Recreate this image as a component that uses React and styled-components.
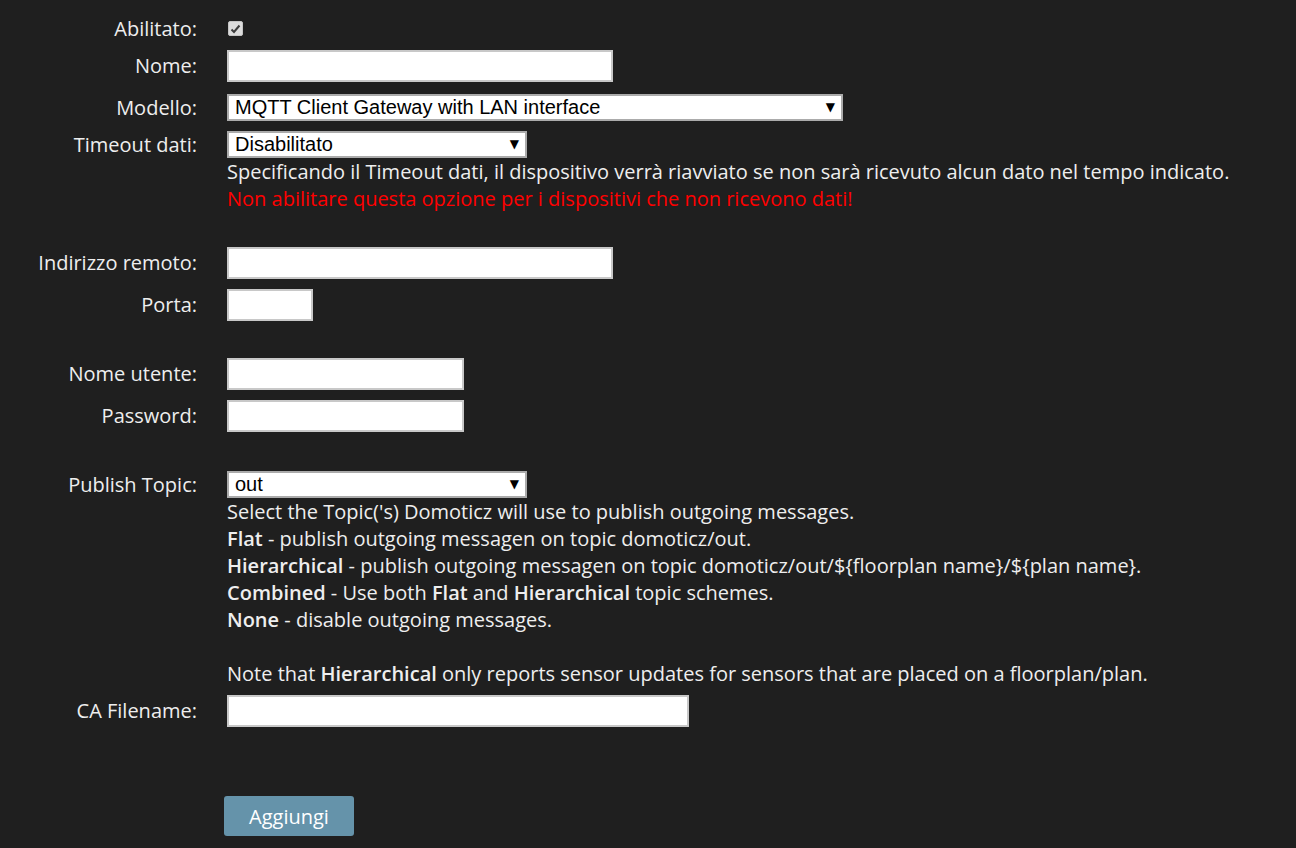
import React from 'react'
import styled, { createGlobalStyle } from 'styled-components'

const GlobalStyle = createGlobalStyle`
  html, body {
    margin: 0;
    padding: 0;
    background: #1f1f1f;
  }
  body {
    font-family: 'Open Sans', 'DejaVu Sans', sans-serif;
    font-size: 20px;
    color: #eeeeee;
  }
  b {
    font-weight: 600;
  }
`

const Form = styled.form`
  padding-top: 15px;
  padding-bottom: 12px;
`

const Row = styled.div`
  display: grid;
  grid-template-columns: 197px 1fr;
  column-gap: 30px;
  margin-top: ${(props) => props.gap || 0}px;
`

const Label = styled.label`
  text-align: right;
  white-space: nowrap;
  line-height: ${(props) => props.h || 27}px;
`

const Cell = styled.div`
  display: flex;
  flex-direction: column;
  align-items: flex-start;
`

const CheckWrap = styled.div`
  height: 27px;
  display: flex;
  align-items: center;
  padding-left: 1px;
`

const CheckBox = styled.span`
  width: 13px;
  height: 13px;
  border: 1px solid #c4c4c4;
  border-radius: 2px;
  background: #dcdcdc;
  display: flex;
  align-items: center;
  justify-content: center;
`

const Input = styled.input`
  display: block;
  box-sizing: border-box;
  width: ${(props) => props.w}px;
  height: 32px;
  border: 2px solid #c8c8c8;
  background: #ffffff;
  margin: 0;
  padding: 0 6px;
  font-size: 18px;
  outline: none;
`

const SelectBox = styled.div`
  position: relative;
  width: ${(props) => props.w}px;
  height: 27px;
  &::after {
    content: '▼';
    position: absolute;
    right: 8px;
    top: 5px;
    line-height: 16px;
    font-family: 'DejaVu Sans', sans-serif;
    font-size: 12px;
    color: #000;
    pointer-events: none;
  }
`

const Select = styled.select`
  display: block;
  appearance: none;
  box-sizing: border-box;
  width: 100%;
  height: 27px;
  margin: 0;
  border: 2px solid #ababab;
  border-radius: 0;
  background: #ffffff;
  color: #000;
  padding: 0 6px;
  font-family: 'Liberation Sans', Arial, sans-serif;
  font-size: 20px;
  line-height: 23px;
  outline: none;
`

const Help = styled.div`
  line-height: 27px;
  color: ${(props) => (props.warn ? '#ff0000' : '#eeeeee')};
  white-space: nowrap;
`

const Spacer = styled.div`
  height: 27px;
`

const Button = styled.button`
  margin-left: -3px;
  width: 130px;
  height: 40px;
  border: none;
  border-radius: 3px;
  background: #6593aa;
  color: #ffffff;
  font-family: 'Open Sans', sans-serif;
  font-size: 20px;
  padding: 0;
  cursor: pointer;
`

const Tick = () => (
  <svg width="11" height="10" viewBox="0 0 11 10">
    <path d="M1.5 5.5 L4 8 L9.5 1.5" fill="none" stroke="#3c3c3c" strokeWidth="2" />
  </svg>
)

const Dropdown = ({ w, value, options }) => (
  <SelectBox w={w}>
    <Select defaultValue={value}>
      {options.map((o) => (
        <option key={o}>{o}</option>
      ))}
    </Select>
  </SelectBox>
)

export default function App() {
  return (
    <>
      <GlobalStyle />
      <Form onSubmit={(e) => e.preventDefault()}>
        <Row>
          <Label>Abilitato:</Label>
          <CheckWrap>
            <CheckBox>
              <Tick />
            </CheckBox>
          </CheckWrap>
        </Row>
        <Row gap={8}>
          <Label h={32}>Nome:</Label>
          <Cell>
            <Input w={386} />
          </Cell>
        </Row>
        <Row gap={12}>
          <Label>Modello:</Label>
          <Cell>
            <Dropdown
              w={616}
              value="MQTT Client Gateway with LAN interface"
              options={['MQTT Client Gateway with LAN interface']}
            />
          </Cell>
        </Row>
        <Row gap={10}>
          <Label>Timeout dati:</Label>
          <Cell>
            <Dropdown w={300} value="Disabilitato" options={['Disabilitato']} />
            <Help>
              Specificando il Timeout dati, il dispositivo verrà riavviato se non sarà ricevuto alcun dato nel
              tempo indicato.
            </Help>
            <Help warn>Non abilitare questa opzione per i dispositivi che non ricevono dati!</Help>
          </Cell>
        </Row>
        <Row gap={35}>
          <Label h={32}>Indirizzo remoto:</Label>
          <Cell>
            <Input w={386} />
          </Cell>
        </Row>
        <Row gap={10}>
          <Label h={32}>Porta:</Label>
          <Cell>
            <Input w={86} />
          </Cell>
        </Row>
        <Row gap={37}>
          <Label h={32}>Nome utente:</Label>
          <Cell>
            <Input w={237} />
          </Cell>
        </Row>
        <Row gap={10}>
          <Label h={32}>Password:</Label>
          <Cell>
            <Input w={237} type="password" />
          </Cell>
        </Row>
        <Row gap={39}>
          <Label>Publish Topic:</Label>
          <Cell>
            <Dropdown w={300} value="out" options={['out']} />
            <Help>Select the Topic('s) Domoticz will use to publish outgoing messages.</Help>
            <Help>
              <b>Flat</b> - publish outgoing messagen on topic domoticz/out.
            </Help>
            <Help>
              <b>Hierarchical</b> - publish outgoing messagen on topic domoticz/out/${'{'}floorplan name{'}'}/${'{'}plan
              name{'}'}.
            </Help>
            <Help>
              <b>Combined</b> - Use both <b>Flat</b> and <b>Hierarchical</b> topic schemes.
            </Help>
            <Help>
              <b>None</b> - disable outgoing messages.
            </Help>
            <Spacer />
            <Help>
              Note that <b>Hierarchical</b> only reports sensor updates for sensors that are placed on a
              floorplan/plan.
            </Help>
          </Cell>
        </Row>
        <Row gap={8}>
          <Label h={32}>CA Filename:</Label>
          <Cell>
            <Input w={462} />
          </Cell>
        </Row>
        <Row gap={69}>
          <span />
          <Cell>
            <Button type="submit">Aggiungi</Button>
          </Cell>
        </Row>
      </Form>
    </>
  )
}
